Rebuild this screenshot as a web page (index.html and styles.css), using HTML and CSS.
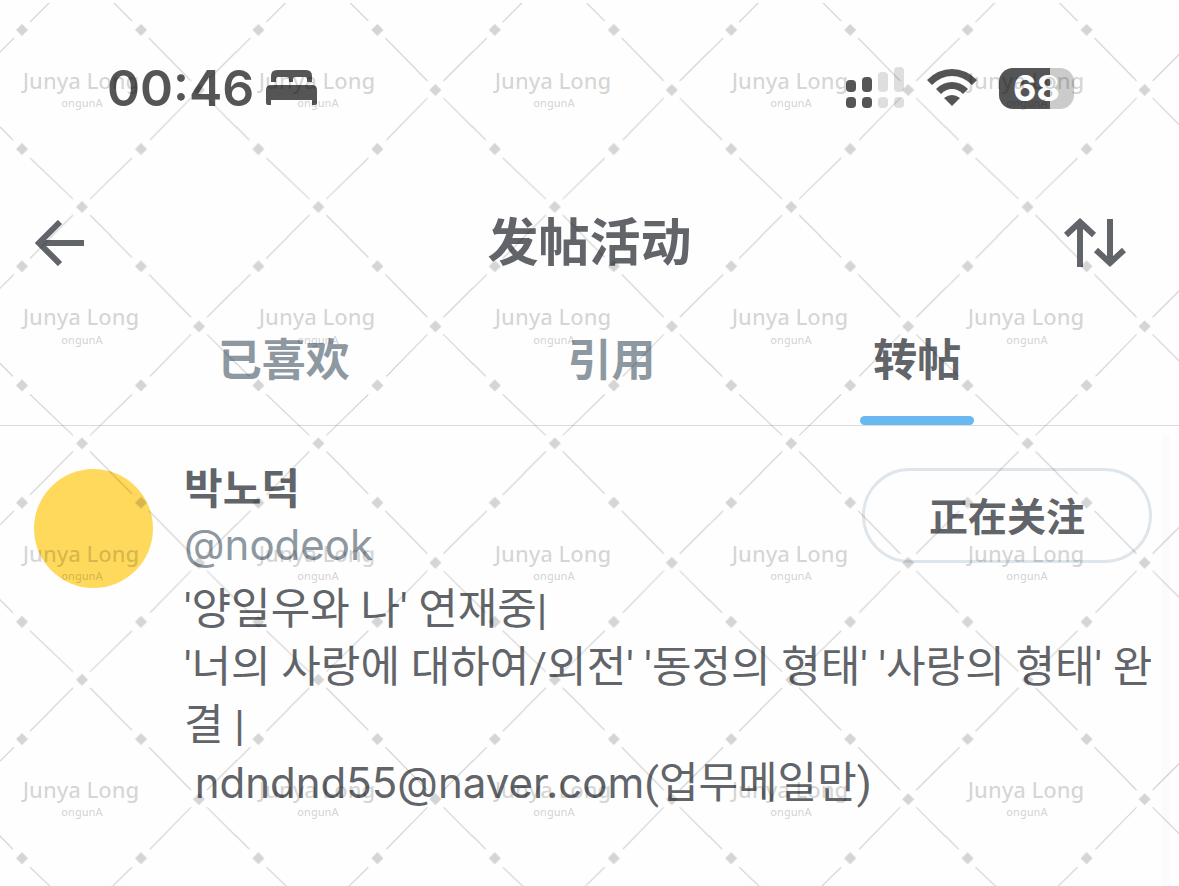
FILE: index.html
```
<!DOCTYPE html>
<html lang="zh-CN">
<head>
<meta charset="utf-8">
<meta name="viewport" content="width=device-width, initial-scale=1">
<title>发帖活动</title>
<link rel="stylesheet" href="styles.css">
</head>
<body>
<div class="screen">
  <div class="status-bar">
    <div class="status-left">
      <span class="clock">00:46</span>
      <svg class="bed-icon" width="52" height="36" viewBox="0 0 52 36" aria-hidden="true">
        <path d="M5 12V6Q5 0 11 0H40Q46 0 46 6V12H41V9Q41 7 39 7H29Q27 7 27 9V12H23V9Q23 7 21 7H12Q10 7 10 9V12Z"/>
        <path d="M0 33V20Q0 15 5 15H46Q51 15 51 20V33Q51 35 49 35H46V30H5V35H2Q0 35 0 33Z"/>
      </svg>
    </div>
    <div class="status-right">
      <svg width="59" height="42" viewBox="0 0 59 42" aria-hidden="true">
        <g class="signal-on"><rect x="0" y="13" width="10" height="12" rx="4"/><rect x="0" y="30" width="10" height="11" rx="4"/><rect x="16" y="10" width="10" height="15" rx="4"/><rect x="16" y="30" width="10" height="11" rx="4"/></g>
        <g class="signal-off"><rect x="32" y="5" width="10" height="20" rx="4"/><rect x="32" y="30" width="10" height="11" rx="4"/><rect x="48" y="0" width="10" height="25" rx="4"/><rect x="48" y="30" width="10" height="11" rx="4"/></g>
      </svg>
      <svg class="wifi-icon" width="50" height="38" viewBox="0 0 50 38" aria-hidden="true">
        <path d="M0 11Q11 0 25 0T50 11L45 16Q36 7 25 7T5 16Z"/>
        <path d="M9 20Q16 13 25 13T41 20L36 25Q31 20 25 20T14 25Z"/>
        <path d="M17 29Q21 26 25 26T33 29L25 37Z"/>
      </svg>
      <span class="battery"><span class="battery-level">68</span></span>
    </div>
  </div>

  <header class="top-bar">
    <button class="icon-button back" type="button" aria-label="返回">
      <svg width="50" height="46" viewBox="0 0 50 46" fill="none" stroke="currentColor" stroke-width="6" aria-hidden="true"><path d="M25 2L4 23L25 44M4 23H49"/></svg>
    </button>
    <h1 class="title">发帖活动</h1>
    <button class="icon-button" type="button" aria-label="排序">
      <svg width="62" height="50" viewBox="0 0 62 50" fill="none" stroke="currentColor" stroke-width="6" aria-hidden="true"><path d="M2 17L16 4L30 17M16 4V49M32 32L46 45L60 32M46 45V1"/></svg>
    </button>
  </header>

  <nav class="tabs">
    <a class="tab" href="#liked">已喜欢</a>
    <a class="tab" href="#quotes">引用</a>
    <a class="tab active" href="#reposts" aria-current="page">转帖</a>
  </nav>

  <main class="list">
    <article class="user">
      <div class="avatar"></div>
      <div class="identity" lang="ko">
        <h2 class="name">박노덕</h2>
        <a class="handle" href="#nodeok">@nodeok</a>
      </div>
      <button class="follow" type="button">正在关注</button>
      <p class="bio" lang="ko">'양일우와 나' 연재중|
'너의 사랑에 대하여/외전' '동정의 형태' '사랑의 형태' 완결 |
 <span class="contact">ndndnd55@naver.com</span>(업무메일만)</p>
    </article>
  </main>

  <svg class="watermark" aria-hidden="true">
    <defs>
      <pattern id="mesh" width="236.4" height="236.4" patternUnits="userSpaceOnUse">
        <path class="mesh-line" d="M14 38L-29 81M30 22L73 -21M90 -21L132 21M149 38L191 81M191 98L150 140M132 158L90 199M73 199L30 158M13 140L-29 98M250 38L207 81M207 98L249 140M73 215L30 258M90 215L132 257"/>
        <path class="mesh-dot" d="M22 24l6 6l-6 6l-6 -6zM141 24l6 6l-6 6l-6 -6zM22 143l6 6l-6 6l-6 -6zM141 143l6 6l-6 6l-6 -6zM199 84l6 6l-6 6l-6 -6zM82 201l6 6l-6 6l-6 -6z"/>
      </pattern>
    </defs>
    <rect y="3" width="100%" height="100%" fill="url(#mesh)"/>
    <g class="mark">
      <text x="81" y="89">Junya Long</text><text x="317" y="89">Junya Long</text><text x="553" y="89">Junya Long</text><text x="790" y="89">Junya Long</text><text x="1026" y="89">Junya Long</text>
      <text x="81" y="325">Junya Long</text><text x="317" y="325">Junya Long</text><text x="553" y="325">Junya Long</text><text x="790" y="325">Junya Long</text><text x="1026" y="325">Junya Long</text>
      <text x="81" y="562">Junya Long</text><text x="317" y="562">Junya Long</text><text x="553" y="562">Junya Long</text><text x="790" y="562">Junya Long</text><text x="1026" y="562">Junya Long</text>
      <text x="81" y="798">Junya Long</text><text x="317" y="798">Junya Long</text><text x="553" y="798">Junya Long</text><text x="790" y="798">Junya Long</text><text x="1026" y="798">Junya Long</text>
    </g>
    <g class="mark mark-small">
      <text x="82" y="107">ongunA</text><text x="318" y="107">ongunA</text><text x="554" y="107">ongunA</text><text x="791" y="107">ongunA</text><text x="1027" y="107">ongunA</text>
      <text x="82" y="344">ongunA</text><text x="318" y="344">ongunA</text><text x="554" y="344">ongunA</text><text x="791" y="344">ongunA</text><text x="1027" y="344">ongunA</text>
      <text x="82" y="580">ongunA</text><text x="318" y="580">ongunA</text><text x="554" y="580">ongunA</text><text x="791" y="580">ongunA</text><text x="1027" y="580">ongunA</text>
      <text x="82" y="816">ongunA</text><text x="318" y="816">ongunA</text><text x="554" y="816">ongunA</text><text x="791" y="816">ongunA</text><text x="1027" y="816">ongunA</text>
    </g>
  </svg>
</div>
</body>
</html>
```

FILE: styles.css
```
* { box-sizing: border-box; }

body {
  margin: 0;
  background: #fefefe;
  color: #616468;
  font-family: Inter, "Noto Sans CJK SC", sans-serif;
}

.screen {
  position: relative;
  display: flex;
  flex-direction: column;
  min-height: 100vh;
  overflow: hidden;
}

.status-bar {
  display: flex;
  justify-content: space-between;
  align-items: center;
  padding: 56px 105px 0 107px;
  color: #555;
  fill: #555;
}

.status-left, .status-right { display: flex; align-items: center; }
.status-left { gap: 12px; }
.status-right { gap: 22px; }

.clock { font-size: 50px; line-height: 64px; font-weight: 600; }
.signal-off { fill: #dedede; }

.battery {
  width: 75px;
  height: 41px;
  border-radius: 14px;
  background: linear-gradient(90deg, #555 68%, #cbcbcb 68%);
  color: #fefefe;
  text-align: center;
}

.battery-level { font-size: 36px; line-height: 41px; font-weight: 700; }

.top-bar {
  display: flex;
  justify-content: space-between;
  align-items: center;
  padding: 84px 53px 0 35px;
}

.icon-button {
  display: flex;
  width: 62px;
  padding: 0;
  border: 0;
  background: none;
  color: #616468;
}

.back { width: 80px; }

.title { margin: 0; font-size: 51px; line-height: 78px; font-weight: 700; }

.tabs {
  display: flex;
  justify-content: space-evenly;
  padding-top: 42px;
  border-bottom: 1px solid #d9dcde;
}

.tab {
  position: relative;
  height: 101px;
  color: #8d98a1;
  font-size: 44px;
  line-height: 72px;
  font-weight: 700;
  text-decoration: none;
}

.active { color: #616468; }

.active::after {
  content: "";
  position: absolute;
  inset: auto -13px 0;
  height: 9px;
  border-radius: 5px;
  background: #69b9f0;
}

.list { position: relative; flex: 1; }

.list::after {
  content: "";
  position: absolute;
  inset: 9px 9px 0 auto;
  width: 8px;
  background: #fbfbfb;
  z-index: -1;
}

.user {
  display: grid;
  grid-template-columns: 119px 1fr 290px;
  column-gap: 31px;
  padding: 34px 27px 40px 34px;
}

.avatar {
  height: 119px;
  margin-top: 9px;
  border-radius: 50%;
  background: #ffd95c;
  grid-row: span 2;
}

.identity { display: flex; flex-direction: column; }

.identity, .contact { font-family: Inter, "Noto Sans CJK KR", sans-serif; font-size: 42px; }

.name { margin: 0; font-size: 42px; line-height: 58px; font-weight: 700; }
.handle { line-height: 54px; color: #8d98a1; text-decoration: none; }

.follow {
  height: 95px;
  margin-top: 8px;
  padding-bottom: 5px;
  border: 3px solid #dfe6eb;
  border-radius: 48px;
  background: transparent;
  color: #616468;
  font: 700 39px "Noto Sans CJK SC", sans-serif;
}

.bio {
  grid-column: 2 / 4;
  margin: 8px -16px 0 0;
  font-family: Roboto, "Noto Sans CJK KR", sans-serif;
  font-size: 43px;
  line-height: 58px;
  white-space: pre-wrap;
  word-break: break-all;
}

.watermark {
  position: absolute;
  inset: 0 1px 0 0;
  width: 100%;
  height: 100%;
  pointer-events: none;
}

.mesh-line { stroke: rgba(0, 0, 0, .2); fill: none; }
.mesh-dot { fill: rgba(0, 0, 0, .16); }

.mark {
  fill: rgba(0, 0, 0, .18);
  font-family: "Noto Sans", sans-serif;
  font-size: 22px;
  font-weight: 500;
  text-anchor: middle;
}

.mark-small { font-size: 11px; }
```
